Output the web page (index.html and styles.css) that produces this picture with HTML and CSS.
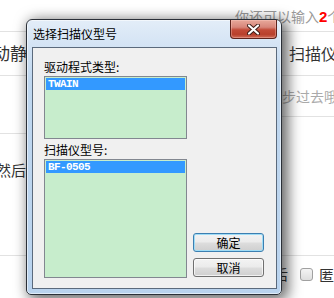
FILE: index.html
```html
<!DOCTYPE html>
<html lang="zh-CN">
<head>
<meta charset="utf-8">
<title>选择扫描仪型号</title>
<link rel="stylesheet" href="styles.css">
</head>
<body>
<div class="page">
  <div class="top">你还可以输入<b class="num">2</b>个字</div>
  <div class="main">
    <div class="left">
      <div class="l1"><span class="shift-a">动静态</span></div>
      <div class="l2"></div>
      <div class="l3"><span class="shift-b">然后</span></div>
    </div>
    <div class="mid"></div>
    <div class="right">
      <div class="r1">扫描仪型号</div>
      <div class="r2"><span class="hint">步过去哦</span></div>
      <div class="r3"></div>
      <div class="r4"><span class="shift-c">后</span><span class="cb"></span><span class="anon">匿名</span></div>
    </div>
  </div>
</div>

<div class="dialog">
  <div class="titlebar">
    <span class="title">选择扫描仪型号</span>
    <span class="close">
      <svg width="13" height="11" viewBox="0 0 13 11">
        <path d="M2 1.5 L11 9.5 M11 1.5 L2 9.5" stroke="#3a1a14" stroke-width="4" stroke-linecap="round" fill="none"/>
        <path d="M2 1.5 L11 9.5 M11 1.5 L2 9.5" stroke="#ffffff" stroke-width="2.2" stroke-linecap="round" fill="none"/>
      </svg>
    </span>
  </div>
  <div class="client">
    <div class="lists">
      <div class="lbl">驱动程式类型:</div>
      <div class="lb lb1"><div class="sel">TWAIN</div></div>
      <div class="lbl lbl2">扫描仪型号:</div>
      <div class="lb lb2"><div class="sel">BF-0505</div></div>
    </div>
    <div class="btns">
      <div class="btn default">确定</div>
      <div class="btn">取消</div>
    </div>
  </div>
</div>
</body>
</html>
```

FILE: styles.css
```css
* { box-sizing: border-box; }
html, body {
  margin: 0;
  padding: 0;
  width: 334px;
  height: 298px;
  overflow: hidden;
  background: #fff;
  font-family: "Noto Sans CJK SC", "Noto Sans", sans-serif;
}
body { position: relative; }

.page { width: 334px; height: 298px; }

.top {
  height: 32px;
  border-bottom: 1px solid #e2e2e2;
  padding-left: 235px;
  white-space: nowrap;
  overflow: hidden;
  font-size: 14px;
  line-height: 33px;
  color: #9a9a9a;
}
.top .num { color: #f00; font-weight: bold; font-family: "Liberation Sans", sans-serif; font-size: 15px; }

.main { display: flex; height: 266px; }
.left { width: 26px; overflow: hidden; white-space: nowrap; }
.mid { flex: 1; }
.right { width: 52px; overflow: hidden; white-space: nowrap; }

.l1 { height: 44px; border-bottom: 1px solid #e2e2e2; font-size: 17px; line-height: 42px; color: #333; }
.shift-a { margin-left: -7px; }
.l2 { height: 58px; border-bottom: 1px solid #e2e2e2; }
.l3 { height: 122px; border-bottom: 1px solid #e2e2e2; padding-top: 26px; font-size: 15px; line-height: 20px; color: #333; }
.shift-b { margin-left: -4px; }

.r1 { height: 44px; border-bottom: 1px solid #e2e2e2; padding-left: 7px; font-size: 16px; line-height: 42px; color: #333; }
.r2 { height: 41px; border-bottom: 1px solid #e2e2e2; font-size: 14px; line-height: 40px; color: #aaa; }
.hint { margin-left: 0; }
.r3 { height: 139px; border-bottom: 1px solid #e2e2e2; }
.r4 { height: 36px; display: flex; align-items: center; font-size: 14px; color: #333; }
.shift-c { margin-left: -8px; width: 19px; flex: none; }
.cb {
  flex: none;
  width: 13px; height: 13px;
  border: 1px solid #a0a0a0;
  border-radius: 3px;
  background: linear-gradient(#f4f4f4, #dedede);
  margin-left: 7px;
  margin-right: 6px;
}
.anon { font-size: 15px; }

/* dialog */
.dialog {
  position: absolute;
  left: 26px;
  top: 19px;
  width: 256px;
  height: 276px;
  border: 1px solid #2b3038;
  border-radius: 6px 6px 5px 5px;
  background: linear-gradient(#e3edf8 0px, #d3e3f4 27px, #bfd7ef 60px, #b9d3ee 100%);
  box-shadow: inset 0 0 0 1px rgba(255,255,255,0.55), 4px 3px 14px 2px rgba(0,0,0,0.6);
  display: flex;
  flex-direction: column;
}
.titlebar {
  height: 27px;
  display: flex;
  justify-content: space-between;
  align-items: flex-start;
  flex: none;
}
.title {
  padding-left: 6px;
  font-size: 12px;
  line-height: 27px;
  color: #000;
}
.close {
  width: 47px;
  height: 19px;
  margin-right: 4px;
  border: 1px solid #5e231c;
  border-top: none;
  border-radius: 0 0 4px 4px;
  background: linear-gradient(#e8a99b 0%, #d7867a 40%, #c24a37 55%, #b8402c 80%, #cf6c58 100%);
  box-shadow: inset 0 0 0 1px rgba(255,210,200,0.35);
  display: flex;
  align-items: center;
  justify-content: center;
}
.close svg { display: block; }

.client {
  flex: 1;
  margin: 0 4px 6px 5px;
  border: 1px solid #5b6a7c;
  background: #f0f0f0;
  display: flex;
}
.lists {
  width: 154px;
  padding: 11px 0 10px 11px;
  display: flex;
  flex-direction: column;
}
.lbl {
  height: 17px;
  font-size: 12px;
  line-height: 16px;
  color: #000;
  white-space: nowrap;
}
.lbl2 { margin-top: 3px; }
.lb {
  border: 1px solid #828790;
  background: #c7edcc;
  padding: 1px;
}
.lb1 { height: 63px; }
.lb2 { height: 119px; }
.sel {
  height: 12px;
  background: #3399ff;
  color: #fff;
  font-family: "Liberation Mono", "DejaVu Sans Mono", monospace;
  font-weight: bold;
  font-size: 11px;
  letter-spacing: -0.6px;
  line-height: 12px;
  padding-left: 2px;
}
.btns {
  display: flex;
  flex-direction: column;
  justify-content: flex-end;
  gap: 6px;
  margin-left: 6px;
  padding-bottom: 11px;
}
.btn {
  width: 71px;
  height: 19px;
  border: 1px solid #707070;
  border-radius: 3px;
  background: linear-gradient(#f3f3f3 0%, #ebebeb 48%, #dddddd 52%, #cfcfcf 100%);
  box-shadow: inset 0 0 0 1px rgba(255,255,255,0.7);
  font-size: 12px;
  line-height: 17px;
  text-align: center;
  color: #000;
}
.btn.default {
  border-color: #3c7fb1;
  box-shadow: inset 0 0 0 1px #9fdcf6;
}
```
